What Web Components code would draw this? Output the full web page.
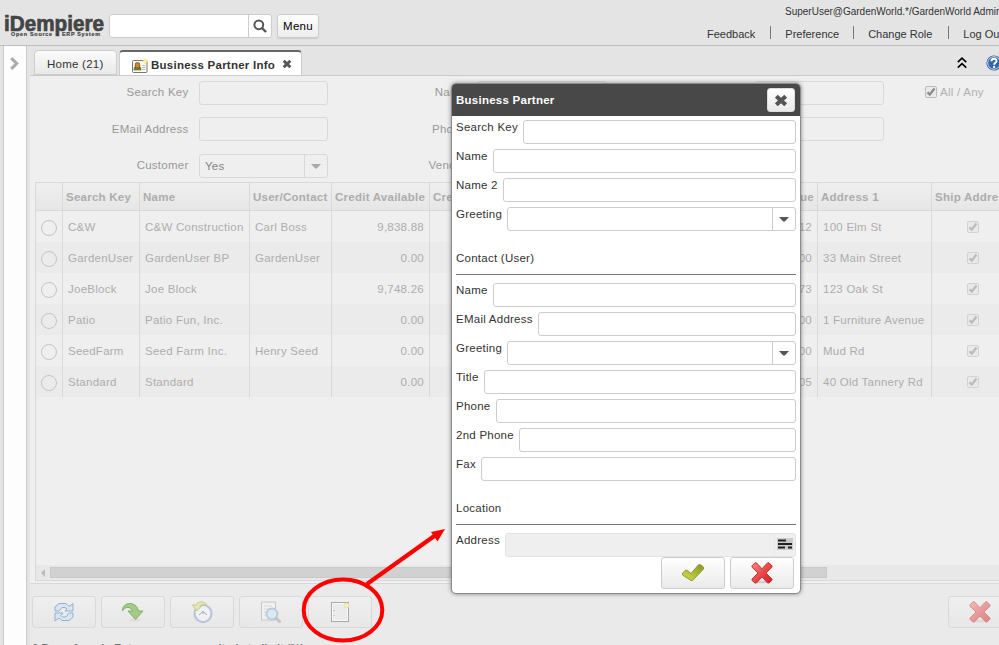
<!DOCTYPE html>
<html lang="en">
<head>
<meta charset="utf-8">
<title>iDempiere</title>
<style>
html,body{margin:0;height:645px;width:999px;overflow:hidden}
body{font:11.5px/14px "Liberation Sans",Arial,sans-serif;letter-spacing:.25px;color:#333}
</style>
</head>
<body>
<idem-app></idem-app>
<script>
const define = (name, html) => customElements.define(name, class extends HTMLElement {
  connectedCallback() {
    if (this.shadowRoot) return;
    const root = this.attachShadow({ mode: 'open' });
    const t = document.createElement('template');
    t.innerHTML = typeof html === 'function' ? html(this) : html;
    root.append(t.content.cloneNode(true));
  }
});

const cross = `<defs><linearGradient id="g" x1="0" y1="0" x2="1" y2="1"><stop offset="0" stop-color="#f58a8a"/><stop offset=".5" stop-color="#e84a4a"/><stop offset="1" stop-color="#d81c1c"/></linearGradient></defs><ellipse cx="11" cy="20" rx="6" ry="1.3" fill="#bbb" opacity=".6"/><path d="M4 .8 1 3.8v1.4L7 11l-6 6v1.4L4 21h1.5l5.5-6 5.6 6H18l3-2.8V17l-6-6 6-5.8V3.8L18 .8h-1.4L11 6.8 5.4.8Z" fill="url(#g)" stroke="#c23434" stroke-width="1"/>`;
const icons = {
  search: [14, 14, `<circle cx="5.8" cy="5.8" r="4.4" fill="none" stroke="#555" stroke-width="2"/><path d="M9 9l4 4" stroke="#555" stroke-width="2.4"/>`],
  close: [14, 13, `<path d="M2.300 2.300 11.700 10.700M11.700 2.300 2.300 10.700" stroke="currentColor" stroke-width="4.200"/>`],
  closeSmall: [10, 10, `<path d="M1.700 1.700 8.300 8.300M8.300 1.700 1.700 8.300" stroke="currentColor" stroke-width="2.900"/>`],
  chevron: [9, 13, `<path d="M1.200 1.200 6.700 6.500 1.200 11.800" fill="none" stroke="#aaa" stroke-width="3"/>`],
  up: [10, 12, `<path d="M.8 5.2 5 1.2l4.2 4M.8 10.7 5 6.7l4.2 4" fill="none" stroke="#000" stroke-width="1.6"/>`],
  help: [16, 16, `<circle cx="8" cy="8" r="7.6" fill="#2e5d9e"/><circle cx="8" cy="8" r="6.3" fill="#3467aa" stroke="#d5e2f2"/><path d="M5.4 6.3C5.4 2.7 10.7 3 10.5 6c0 1.7-2.4 1.8-2.4 3.7" fill="none" stroke="#fff" stroke-width="1.9"/><circle cx="8.1" cy="12" r="1.15" fill="#fff"/>`],
  card: [16, 16, `<rect x=".5" y="2.500" width="14.500" height="12" rx="1" fill="#fafafa" stroke="#77776c"/><path d="M2 12v-1q0-2 2-2h3q2 0 2 2v1Z" fill="#6d8f32" stroke="#4d5a1e" stroke-width=".6"/><path d="M3.300 10V6.500q0-1.800 1.400-1.800h1.600q1.400 0 1.400 1.800V10Z" fill="#c98a2a" stroke="#6b4514" stroke-width=".8"/><path d="M10 7.500h3.500M10 9.500h3.500M10 11.500h3.500" stroke="#bbb"/><path d="m13 .3.900 2.100 2 .8-2 .9-.9 2-.9-2-2-.9 2-.8Z" fill="#fffbb0" stroke="#f4e87a" stroke-width=".7"/>`],
  caret: [10, 5, `<path d="M0 0h10L5.800 4.500H4.200Z" fill="currentColor"/>`],
  lines: [16, 12, `<path d="M0 0h16v12H0Z" fill="#ccc"/><path d="M1 2.500h8M1 6h14M1 9.500h7M11 9.500h4" stroke="#222" stroke-width="2"/>`],
  tick: [24, 19, `<defs><linearGradient id="g" x1="0" y1="1" x2="1" y2="0"><stop offset="0" stop-color="#d2e04c"/><stop offset="1" stop-color="#8b9722"/></linearGradient></defs><path d="m1.500 10.200 3-3h1.500L10 10.500l7.500-8.700h2L22.500 4v2L11.500 17.500H10L1.500 12Z" fill="url(#g)" stroke="#8e9a30"/>`],
  cross: [22, 22, cross],
  refresh: [20, 20, `<path d="M1 8V5l4-3.500h7l3 3 4-3V9h-8l2-2-2-1.500H8L5 9H1Z" fill="#d9e5f1" stroke="#93afd0"/><path d="M19 11v4l-4 3.500H8l-3-2.500-4 3V11h8l-2 2.500L8.500 15H12l3-4Z" fill="#d9e5f1" stroke="#93afd0"/>`],
  redo: [24, 20, `<ellipse cx="14" cy="18" rx="6" ry="1.500" fill="#ddd"/><path d="M1.500 9C1 0 15-2 17.500 9H22l-7.500 8.500L7 9h4.500C10 4.500 4 4 1.500 9Z" fill="#a5ca86" stroke="#80b067"/>`],
  history: [22, 22, `<circle cx="12" cy="12.500" r="8.500" fill="#f0f1f3" stroke="#bac5da" stroke-width="2.200"/><path d="m8 14 4-3.500 4 3.500M12 10v3" fill="none" stroke="#aaa"/><path d="M16 4C13-.5 7 0 5 4H1.500L6 10l4.500-5H8.500Q12 2.500 16 4Z" fill="#e6e7b1" stroke="#c4cb91"/>`],
  zoom: [22, 22, `<path d="M1.500 1h14v18h-14Z" fill="#f1f1f1" stroke="#c6c6c6"/><path d="M4 5h8M4 8h6M4 11h4M4 14h4" stroke="#d6d6d6"/><circle cx="12" cy="13" r="5.500" fill="#dbe8f1" stroke="#b9cadd" stroke-width="1.800"/><path d="m16.500 17.500 3 3" stroke="#c4c4c4" stroke-width="3" stroke-linecap="round"/>`],
  new: [22, 22, `<rect x="2.500" y="1.500" width="17" height="19" fill="#ebebeb" stroke="#aaa"/><rect x="3.500" y="2.500" width="15" height="17" fill="none" stroke="#f8f8f8"/><path d="M5 9v1M5 14v1" stroke="#aaa"/><circle cx="17.500" cy="4.500" r="2.400" fill="#f5f2be" stroke="#ebe1a2"/>`]
};
define('x-icon', el => {
  const [w, h, body] = icons[el.getAttribute('name')];
  return `<style>:host{display:block;flex:none;width:${w}px;height:${h}px}svg{display:block}</style><svg width="${w}" height="${h}" viewBox="0 0 ${w} ${h}">${body}</svg>`;
});

define('x-check', `<style>:host{display:block;box-sizing:border-box;width:12px;height:12px;border:1px solid #d2d2d2;border-radius:2px;background:#e9e9e9;color:#bcbcbc}:host([dark]){border-color:#bbb;color:#8d8d8d}svg{display:block}</style><svg width="10" height="10" viewBox="0 0 10 10"><path d="m1.500 5.300 2.300 2.200L8.500 1.500" fill="none" stroke="currentColor" stroke-width="2.300"/></svg>`);

define('x-input', el => `<style>
:host{display:flex;box-sizing:border-box;height:24px;border:1px solid #ccc;border-radius:3px;background:#fff;color:#555;min-width:0}
:host([faded]){border-color:#d9d9d9;background:#efefef;color:#aaa}
:host([readonly]){border-color:#e3e3e3;background:#efefef}
.v{flex:1;padding:4px 5px 0;color:#858585}
.b{width:22px;border-left:1px solid #ccc;display:grid;place-items:center;padding-top:1px}
:host([faded]) .b{border-color:#d9d9d9}
:host([readonly]) .b{border-color:#e9e9e9;width:20px;padding:0 0 2px}
</style><div class="v"><slot></slot></div>${el.hasAttribute('icon') ? `<div class="b"><x-icon name="${el.getAttribute('icon')}"></x-icon></div>` : ''}`);

define('x-button', el => `<style>
:host{display:grid;place-items:center;box-sizing:border-box;width:64px;height:32px;border:1px solid #ccc;border-radius:3px;background:linear-gradient(#fff,#eaeaea);flex:none}
:host([faded]){border-color:#d9d9d9;background:linear-gradient(#efefef,#e7e7e7)}
x-icon{margin-bottom:1px}
:host([dim]) x-icon{opacity:.5}
</style><x-icon name="${el.getAttribute('icon')}"></x-icon>`);

define('app-header', `<style>
:host{display:flex;box-sizing:border-box;height:46px;border-bottom:1px solid #bdbdbd;background:#e4e4e4;justify-content:space-between}
.l{display:flex;padding:14px 0 0 4px}
.logo{width:105px;height:26px;display:block;letter-spacing:0}
.s{display:flex;box-sizing:border-box;width:163px;height:24px;border:1px solid #ccc;border-radius:3px;background:#fff}
.s i{flex:1}.s div{width:22px;border-left:1px solid #ccc;display:grid;place-items:center}
.m{margin-left:5px;box-sizing:border-box;width:42px;height:24px;border:1px solid #ccc;border-radius:3px;background:linear-gradient(#fefefe,#ededed);color:#000;text-align:center;line-height:23px;box-shadow:0 1px 1px #ccc}
.r{width:292px;white-space:nowrap;font-size:11px;letter-spacing:0}
.u{font-size:10px;line-height:12px;padding:6px 0 0 78px;color:#333}
nav{display:flex;margin-top:8px}
nav a{line-height:16px}
nav a+a{margin-left:15px;padding-left:15px;background:linear-gradient(#777,#777) 0 0/1px 13px no-repeat}
nav a+a+a{margin-left:14px}
nav a+a+a+a{margin-left:16px}
</style>
<div class="l"><svg class="logo" viewBox="0 0 105 26"><g font-family="Liberation Sans" font-weight="700" fill="#444"><text x="0" y="16.600" font-size="21.500" textLength="100" lengthAdjust="spacingAndGlyphs" stroke="#444" stroke-width=".7">iDempiere</text><text x="7" y="21.500" font-size="5.400" textLength="41" lengthAdjust="spacing" stroke="#444" stroke-width=".2">Open Source</text><text x="58" y="21.500" font-size="5.400" textLength="38" lengthAdjust="spacing" stroke="#444" stroke-width=".2">ERP System</text></g></svg>
<div class="s"><i></i><div><x-icon name="search"></x-icon></div></div><div class="m">Menu</div></div>
<div class="r"><div class="u">SuperUser@GardenWorld.*/GardenWorld Admin</div><nav><a>Feedback</a><a>Preference</a><a>Change Role</a><a>Log Out</a></nav></div>`);

define('side-rail', `<style>:host{display:block;box-sizing:border-box;width:24px;margin-left:3px;border:solid #c9c9c9;border-width:0 1px;background:#fdfdfd;padding:11px 0 0 6px;flex:none}</style><x-icon name="chevron"></x-icon>`);

define('tab-bar', `<style>
:host{display:flex;box-sizing:border-box;height:30px;padding:4px 0 0 4px;border-bottom:1px solid #c9c9c9;align-items:flex-start}
.t{box-sizing:border-box;width:83px;height:25px;border:1px solid #ccc;border-radius:4px 4px 0 0;background:linear-gradient(#fbfbfb,#e9e9e9);padding:6px 0 0 12px;color:#333;white-space:nowrap}
.a{display:flex;width:183px;height:26px;margin-left:2px;background:#fff;border-top:2px solid #666;font-weight:700;padding:6px 0 0 12px}
.a span{margin-left:3px}.a x-icon+span+x-icon{color:#555;margin:1px 0 0 7px}
.e{display:flex;margin-left:auto;width:42px;gap:19px;padding-top:5px;align-items:center;overflow:hidden}
</style><div class="t">Home (21)</div><div class="t a"><x-icon name="card"></x-icon><span>Business Partner Info</span><x-icon name="closeSmall"></x-icon></div><div class="e"><x-icon name="up"></x-icon><x-icon name="help"></x-icon></div>`);

define('query-form', `<style>
:host{display:grid;grid-template-columns:169px 129px 149px 129px 149px 129px 1fr;grid-template-rows:36px 37px 28px;height:101px;padding-top:5px;color:#999;box-sizing:content-box}
label{text-align:right;padding:4px 10.500px 0 0}
label.d{padding-top:5px}
.c{display:flex;gap:3px;padding:4px 0 0 41px;white-space:nowrap;color:#b0b0b0}
</style>
<label>Search Key</label><x-input faded></x-input><label>Name</label><x-input faded></x-input><label>Name 2</label><x-input faded></x-input><div class="c"><x-check dark style="margin-top:1px"></x-check><span>All / Any</span></div>
<label class="d">EMail Address</label><x-input faded></x-input><label class="d">Phone</label><x-input faded></x-input><label></label><x-input faded></x-input><div></div>
<label>Customer</label><x-input faded icon="caret">Yes</x-input><label>Vendor</label>`);

const rows = [
  ['C&amp;W', 'C&amp;W Construction', 'Carl Boss', '9,838.88', '161.12', '100 Elm St'],
  ['GardenUser', 'GardenUser BP', 'GardenUser', '0.00', '0.00', '33 Main Street'],
  ['JoeBlock', 'Joe Block', '', '9,748.26', '251.73', '123 Oak St'],
  ['Patio', 'Patio Fun, Inc.', '', '0.00', '0.00', '1 Furniture Avenue'],
  ['SeedFarm', 'Seed Farm Inc.', 'Henry Seed', '0.00', '0.00', 'Mud Rd'],
  ['Standard', 'Standard', '', '0.00', '0.05', '40 Old Tannery Rd']
];
define('data-grid', `<style>
:host{display:flex;flex-direction:column;box-sizing:border-box;height:399px;margin-left:5px;border:1px solid #d9d9d9;border-right:0;color:#adadad;overflow:hidden}
.r{display:grid;grid-template-columns:26px 77px 110px 82px 98px 388px 114px 1fr;height:31px;white-space:nowrap}
.r:nth-child(odd){background:#ebebeb}
.r>*{border-left:1px solid #d9d9d9;padding:9px 5px 0;overflow:hidden}
.r>:first-child{border-left:0;padding-top:8px}
.h.r{height:27px;flex:none;background:linear-gradient(#efefef,#e6e6e6);border-bottom:1px solid #d9d9d9;font-weight:700}
.r.h>*{padding:7px 3px 0}
.n{text-align:right}
.h .split{display:flex;justify-content:space-between}
i{display:block;width:14px;height:14px;border:1px solid #c4c4c4;border-radius:50%;margin-top:1px}
.r>.k{padding:10px 0 0 35px}
.sb{display:flex;margin-top:auto;height:15px;background:#e8e8e8;align-items:center}
.sb svg{margin:0 5px}.sb b{box-sizing:border-box;width:777px;height:11px;border:1px solid #c9c9c9;background:#d1d1d1}
.r:nth-child(even){background:#efefef}
</style>
<div class="r h"><span></span><span>Search Key</span><span>Name</span><span>User/Contact</span><span>Credit Available</span><span class="split"><span>Credit Used</span><span>Revenue</span></span><span>Address 1</span><span>Ship Address</span></div>
${rows.map(r => `<div class="r"><span><i></i></span><span>${r[0]}</span><span>${r[1]}</span><span>${r[2]}</span><span class="n">${r[3]}</span><span class="n">${r[4]}</span><span>${r[5]}</span><span class="k"><x-check></x-check></span></div>`).join('')}
<div class="sb"><svg width="4" height="8"><path d="M4 0v8L0 4Z" fill="#bbb"/></svg><b></b></div>`.replace('.r:nth-child(odd){background:#ebebeb}', '.r:nth-of-type(odd){background:#ebebeb}').replace('.r:nth-child(even)', '.r:nth-of-type(even)'));

define('tool-footer', `<style>
:host{display:block;box-sizing:border-box;height:62px;margin-top:2px;border-top:1px solid #d9d9d9;background:#eaeaea;padding:12px 0 0 2px;overflow:hidden}
.b{display:flex;gap:5px;width:980px}.b :last-child{margin-left:571px}
p{margin:13px 0 0;font:700 11px/14px "Liberation Sans",sans-serif;letter-spacing:0;color:#777;white-space:nowrap}
</style><div class="b"><x-button faded icon="refresh"></x-button><x-button faded icon="redo"></x-button><x-button faded icon="history"></x-button><x-button faded icon="zoom"></x-button><x-button faded icon="new"></x-button><x-button faded dim icon="cross"></x-button></div><p>6 Rows found - Enter more query criteria to limit (%)</p>`);

define('field-row', el => `<style>:host{display:flex;height:24px;margin-bottom:5px;gap:5px;color:#333}span{white-space:nowrap}x-input{flex:1}</style><span><slot></slot></span><x-input ${el.hasAttribute('icon') ? `icon="${el.getAttribute('icon')}"` : ''} ${el.hasAttribute('readonly') ? 'readonly' : ''}></x-input>`);

define('field-group', `<style>:host{display:block;height:23px;margin:20px 0 8px;border-bottom:1px solid #777;color:#333}</style><slot></slot>`);

define('partner-dialog', `<style>
:host{position:absolute;left:451px;top:83px;box-sizing:border-box;width:350px;height:511px;border:1px solid #8b8b8b;border-radius:5px;background:#fff;box-shadow:0 0 4px rgba(0,0,0,.45);overflow:hidden}
header{display:flex;justify-content:space-between;box-sizing:border-box;height:32px;background:#484848;color:#fff;font-weight:700;padding:9px 5px 0 4px}
.x{box-sizing:border-box;width:28px;height:24px;margin-top:-5px;border-radius:3px;border:1px solid #ddd;background:linear-gradient(#fff,#e9e9e9);display:grid;place-items:center;color:#555}
main{padding:4px 4px 0}
.b{display:flex;justify-content:flex-end;gap:5px;padding-right:2px;margin-top:-5px}
</style><header><span>Business Partner</span><div class="x"><x-icon name="close"></x-icon></div></header>
<main><field-row>Search Key</field-row><field-row>Name</field-row><field-row>Name 2</field-row><field-row icon="caret">Greeting</field-row>
<field-group>Contact (User)</field-group>
<field-row>Name</field-row><field-row>EMail Address</field-row><field-row icon="caret">Greeting</field-row><field-row>Title</field-row><field-row>Phone</field-row><field-row>2nd Phone</field-row><field-row>Fax</field-row>
<field-group>Location</field-group>
<field-row icon="lines" readonly>Address</field-row>
<div class="b"><x-button icon="tick"></x-button><x-button icon="cross"></x-button></div></main>`);

define('callout-arrow', `<style>:host{position:absolute;left:300px;top:525px}svg{display:block}</style><svg width="150" height="120"><ellipse cx="43" cy="85" rx="39.300" ry="30.500" fill="none" stroke="#f00" stroke-width="4"/><path d="M67 59 135 10.500" stroke="#f00" stroke-width="4.300"/><path d="M145 4 137.500 16.500 131 7Z" fill="#f00"/></svg>`);

define('idem-app', `<style>
:host{display:flex;flex-direction:column;position:relative;width:999px;height:645px;background:#e4e4e4;overflow:hidden}
.m{display:flex;flex:1;min-height:0}
.w{flex:1;min-width:0;margin-left:3px}
.p{background:#efefef;display:flex;flex-direction:column}
</style><app-header></app-header><div class="m"><side-rail></side-rail><div class="w"><tab-bar></tab-bar><div class="p"><query-form></query-form><data-grid></data-grid><tool-footer></tool-footer></div></div></div><partner-dialog></partner-dialog><callout-arrow></callout-arrow>`);
</script>
</body>
</html>
